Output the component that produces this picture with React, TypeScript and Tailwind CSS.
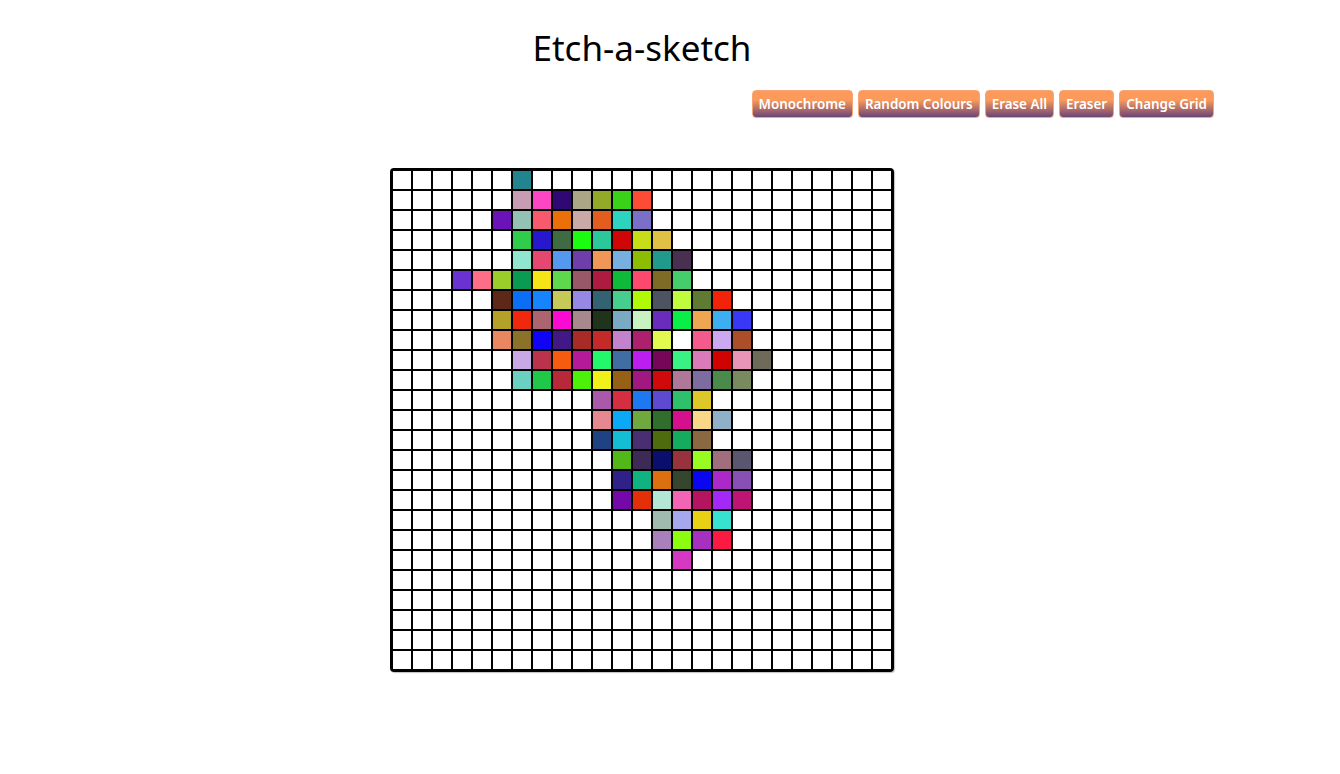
import React from 'react';

// painted cells: row -> [startCol, ...colours] ('' = blank)
const painted: Record<number, [number, string[]]> = {
  0: [6, ['#22848f']],
  1: [6, ['#c89cb2', '#fd46c4', '#2f0874', '#aaa686', '#93aa29', '#3ad219', '#fd4b36']],
  2: [5, ['#6b13b8', '#93c2b5', '#f65a6c', '#ec7008', '#c9aaa6', '#e35e1e', '#2dd3be', '#7a70c8']],
  3: [6, ['#30cc4b', '#2718ce', '#3f6b42', '#1cfc11', '#2bc89b', '#d00505', '#c6dd17', '#e0c045']],
  4: [6, ['#90e6cf', '#e44870', '#5599ef', '#6e3fa8', '#f09757', '#76afe0', '#8dbd02', '#209a8a', '#4a3050']],
  5: [3, ['#6a32d0', '#fc6f86', '#9acd2a', '#0a9a52', '#f5e416', '#5ed84c', '#985868', '#ad1b40', '#0fba3a', '#fe496f', '#7e6b26', '#44cd6a']],
  6: [5, ['#5d2818', '#0a6ff5', '#1684fd', '#c6c858', '#9788e4', '#336272', '#47cd8d', '#b0fa07', '#4e5361', '#c0fb3e', '#5f7a33', '#f22308']],
  7: [5, ['#b3a227', '#f0280e', '#ac6570', '#fa0bd3', '#a7888d', '#21331a', '#7aaac3', '#c9f2c3', '#6a2cbc', '#0aef47', '#eea653', '#3daef0', '#3838f6']],
  8: [5, ['#e88760', '#8c7129', '#1003f6', '#421887', '#a92b28', '#c52a2a', '#c482cc', '#ad206e', '#e2fa50', '', '#f35b8c', '#cca8f0', '#ad4e2a']],
  9: [6, ['#c8a8e5', '#ba324c', '#f75b0f', '#b51b98', '#24f76b', '#406ea2', '#bb1eee', '#760658', '#3af185', '#da7ab8', '#d00303', '#e995b8', '#6e6a5a']],
  10: [6, ['#6ad0c0', '#20c84a', '#b82838', '#4cf00a', '#f0f01a', '#966016', '#a01880', '#d00a0a', '#b07898', '#7c6ca0', '#4a8a4a', '#7a8a60']],
  11: [10, ['#aa58aa', '#d42f40', '#1e78f0', '#5d4ad0', '#2ec06a', '#dcc828']],
  12: [10, ['#e5888f', '#0aa8f5', '#70a840', '#316d2c', '#d6108c', '#f8d888', '#90b0c8']],
  13: [10, ['#1e4282', '#14bcd4', '#4a2e72', '#4e6c0e', '#16ac5e', '#8a6840']],
  14: [11, ['#52b81a', '#3e2a56', '#0a0e6c', '#98333e', '#9afb22', '#a06e7c', '#5a5670']],
  15: [11, ['#30208a', '#10b282', '#dc7010', '#36462e', '#0a06f0', '#ac28c8', '#8850b4']],
  16: [11, ['#7408a8', '#e43008', '#b4e6d6', '#f464b4', '#b41460', '#a428f8', '#c01474']],
  17: [13, ['#a0bab0', '#a6a8ee', '#e8d014', '#38e2d0']],
  18: [13, ['#aa80bc', '#8cfc10', '#a830c0', '#fc1a42']],
  19: [14, ['#d638c4']],
};

const SIZE = 25;

function cellColour(r: number, c: number) {
  const row = painted[r];
  if (!row) return '#ffffff';
  const [start, colours] = row;
  const col = colours[c - start];
  return col ? col : '#ffffff';
}

const buttons = ['Monochrome', 'Random Colours', 'Erase All', 'Eraser', 'Change Grid'];

export default function App() {
  const cells = [];
  for (let r = 0; r < SIZE; r++) {
    for (let c = 0; c < SIZE; c++) {
      cells.push(
        <div
          key={`${r}-${c}`}
          className="w-5 h-5 border border-black"
          style={{ backgroundColor: cellColour(r, c) }}
        />
      );
    }
  }

  return (
    <div className="min-h-screen bg-white font-['Noto_Sans',sans-serif]">
      <div className="w-[1284px] flex flex-col items-center">
        <h1 className="mt-[28px] text-[35px] font-normal text-black leading-[40px]">Etch-a-sketch</h1>

        {/* controls */}
        <div className="self-end mr-[70px] mt-[22px] flex gap-[5px]">
          {buttons.map((b) => (
            <button
              key={b}
              className="h-[28px] px-[6px] rounded-[4px] border border-[#f7a574] bg-[linear-gradient(180deg,#fb9a5a_35%,#6a4577)] text-white text-[13.4px] font-semibold"
            >
              {b}
            </button>
          ))}
        </div>

        {/* sketch area */}
        <div className="mt-[50px] border-2 border-black rounded-[4px] grid grid-cols-[repeat(25,20px)] shadow-[1px_1px_1px_rgba(0,0,0,0.25)]">
          {cells}
        </div>
      </div>
    </div>
  );
}
